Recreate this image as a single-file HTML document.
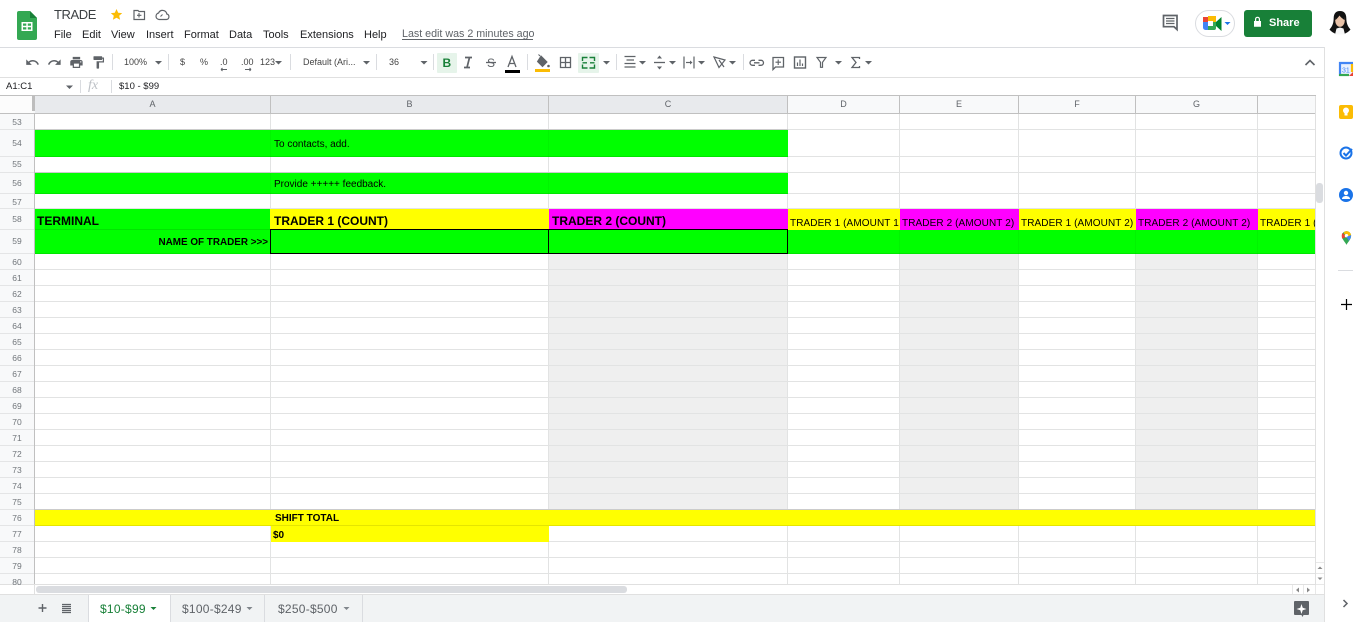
<!DOCTYPE html>
<html><head><meta charset="utf-8"><title>TRADE</title>
<style>
html,body{margin:0;padding:0;width:1365px;height:622px;overflow:hidden;background:#fff;font-family:"Liberation Sans",sans-serif}
svg{position:absolute;left:0;top:0}
.t{position:absolute;white-space:nowrap;color:#000;line-height:14px;height:14px}
.m{font-size:11px;color:#202124;top:28px}
.h{font-size:8.5px;color:#70757a;width:34px;text-align:center;left:0}
.c{font-size:9px;color:#5f6368;top:97px;text-align:center}
.b{font-size:9px;color:#444;top:55px}
.tb{font-size:12px;top:602px;color:#5f6368;font-weight:400;letter-spacing:.25px}
.y{font-size:10px;top:217px;overflow:hidden;letter-spacing:.1px}
</style></head><body>
<svg width="1365" height="622" viewBox="0 0 1365 622">
<!-- chrome -->
<rect x="0" y="47" width="1325" height="1" fill="#dadce0"/>
<rect x="0" y="77" width="1325" height="1" fill="#e0e0e0"/>
<rect x="0" y="95" width="1315" height="1" fill="#e0e0e0"/>
<!-- sheets logo -->
<path d="M19 11h11l7 7v20a2 2 0 0 1-2 2H19a2 2 0 0 1-2-2V13a2 2 0 0 1 2-2z" fill="#34a853"/>
<path d="M30 11v7h7z" fill="#188038"/>
<path d="M21.500 22h11v9h-11z" fill="#fff"/><path d="M23 23.500h3.300v2.200H23zM27.800 23.500H31v2.200h-3.200zM23 27.200h3.300v2.300H23zM27.800 27.200H31v2.300h-3.200z" fill="#34a853"/>
<!-- star, move, cloud -->
<path d="M116.500 9l1.700 3.700 4 .4-3 2.700.9 4-3.600-2.100-3.600 2.100.9-4-3-2.700 4-.4z" fill="#fbbc04"/>
<path d="M134 10.500h4l1 1h5.500v8H134z" fill="none" stroke="#5f6368" stroke-width="1.200"/><path d="M139 13v4.500M137 15.300h4.400" stroke="#5f6368" stroke-width="1.100"/>
<path d="M159 19.500a3.300 3.300 0 0 1-.4-6.500 4.300 4.300 0 0 1 8.200 1 2.800 2.800 0 0 1-.3 5.500z" fill="none" stroke="#5f6368" stroke-width="1.200"/><path d="M160.500 16.500l2-2" stroke="#5f6368" stroke-width="1.100"/>
<path d="M402 39.500h131" stroke="#5f6368" stroke-width="1"/>
<!-- comment icon -->
<path d="M1163.500 15.500h13.500v14l-3-2.800h-10.500z" fill="none" stroke="#5f6368" stroke-width="1.700"/><path d="M1166 18.500h8.500M1166 21h8.500M1166 23.500h8.500" stroke="#5f6368" stroke-width="1.200"/>
<!-- meet -->
<rect x="1195.500" y="10.500" width="39" height="26" rx="13" fill="#fff" stroke="#dadce0"/>
<path d="M1203 17h5v5h-5z" fill="#ea4335"/><path d="M1208 16h8v6h-3v-1h-5z" fill="#fbbc04"/><path d="M1203 22h5v8h-2.500a2.500 2.500 0 0 1-2.500-2.500z" fill="#4285f4"/><path d="M1208 26h8v2a2 2 0 0 1-2 2h-6z" fill="#34a853"/><path d="M1213 22h3v4h-3z" fill="#34a853"/><path d="M1216 22l5.500-5v14l-5.500-5z" fill="#00832d"/><rect x="1208" y="21" width="5" height="5" fill="#fff"/>
<path d="M1224.500 22h6l-3 3z" fill="#1a73e8"/>
<!-- share -->
<rect x="1244" y="10" width="68" height="27" rx="3" fill="#188038"/>
<path d="M1255 21v-1.800a2.500 2.500 0 0 1 5 0V21h1v5.800h-7V21z" fill="#fff"/><path d="M1256.200 21v-1.800a1.300 1.300 0 0 1 2.600 0V21z" fill="#188038"/>
<!-- avatar -->
<path d="M1340 11c-4.500 0-6.200 3-6.300 7-.1 4.500-1 8-4.200 11.500 1.500 2 4 3.500 6.500 4.500h8c2.500-1 5-2.500 6.500-4.500-3.200-3.500-4.100-7-4.200-11.500-.1-4-1.800-7-6.300-7z" fill="#111"/>
<ellipse cx="1340" cy="20.500" rx="4.800" ry="6.300" fill="#e8c2a8"/>
<path d="M1335.500 20c1-1 3-3 4-4.500 1 1.500 3.500 3.500 5 4.500l-.3-5c-1-1.500-2.700-2-4.200-2s-3.500.8-4.300 2.300z" fill="#111"/>
<path d="M1335 34.500l1.500-6 3.500-1 3.500 1 1.500 6z" fill="#f7f7f7"/>
<!-- toolbar icons -->
<g fill="#5f6368">
<path transform="translate(25 55) scale(.62)" d="M12.500 8c-2.650 0-5.050.99-6.900 2.600L2 7v9h9l-3.620-3.620c1.390-1.160 3.160-1.880 5.120-1.880 3.540 0 6.550 2.310 7.600 5.500l2.370-.78C21.080 11.030 17.150 8 12.500 8z"/>
<path transform="translate(47 55) scale(.62)" d="M18.400 10.600C16.550 8.990 14.150 8 11.500 8c-4.650 0-8.580 3.030-9.960 7.220L3.900 16c1.050-3.190 4.050-5.500 7.600-5.500 1.950 0 3.730.72 5.120 1.880L13 16h9V7l-3.600 3.600z"/>
<path transform="translate(69 55) scale(.62)" d="M19 8H5c-1.660 0-3 1.340-3 3v6h4v4h12v-4h4v-6c0-1.660-1.340-3-3-3zm-3 11H8v-5h8v5zm3-7c-.55 0-1-.45-1-1s.45-1 1-1 1 .45 1 1-.45 1-1 1zm-1-9H6v4h12V3z"/>
<path transform="translate(91 55) scale(.62)" d="M18 4V3c0-.55-.45-1-1-1H5c-.55 0-1 .45-1 1v4c0 .55.45 1 1 1h12c.55 0 1-.45 1-1V6h1v4H9v11c0 .55.45 1 1 1h2c.55 0 1-.45 1-1v-9h8V4h-3z"/>
<!-- arrows -->
<path d="M155 61h7l-3.500 3.500zM363 61h7l-3.500 3.500zM420.500 61h7l-3.500 3.500zM275 61h7l-3.500 3.500zM603 61h7l-3.500 3.500zM639 61h7l-3.500 3.500zM669 61h7l-3.500 3.500zM698 61h7l-3.500 3.500zM729 61h7l-3.500 3.500zM835 61h7l-3.500 3.500zM865 61h7l-3.500 3.500z"/>
<path d="M66 85.500h7l-3.500 3.500z"/>
</g>
<path d="M112.500 54v16M168.500 54v16M290.500 54v16M376.500 54v16M433.500 54v16M527.500 54v16M616.500 54v16M743.500 54v16M80.500 80v13M111.500 80v13" stroke="#dadce0"/>
<!-- decimal arrows -->
<path d="M221 69.500h6M221 69.500l1.500-1.500M221 69.500l1.500 1.500M245 69.500h6M251 69.500l-1.500-1.500M251 69.500l-1.500 1.500" stroke="#5f6368" stroke-width="1" fill="none"/>
<!-- B box -->
<rect x="437" y="53" width="20" height="20" rx="1" fill="#e6f4ea"/>
<rect x="578" y="53" width="21" height="20" rx="1" fill="#e6f4ea"/>
<!-- italic, strike, A bar -->
<path d="M465 57.500h7M469.500 57.500l-2.500 10M464 67.500h6" stroke="#5f6368" stroke-width="1.700" fill="none"/>
<path d="M486 62.500h10" stroke="#5f6368" stroke-width="1.300"/>
<rect x="505" y="70" width="15" height="3" fill="#000"/>
<path d="M508 67l4-10.500 4 10.500M509.500 63.500h5" stroke="#5f6368" stroke-width="1.300" fill="none"/>
<!-- fill -->
<path d="M541 56l6 6-4.500 4.500-5-5zM540 56l-1.500-1.500" fill="#5f6368" stroke="#5f6368" stroke-width="1"/><circle cx="548.500" cy="66" r="1.300" fill="#5f6368"/>
<rect x="535" y="69" width="15" height="3" fill="#fbbc04"/>
<!-- borders -->
<path d="M560.500 57.500h10v10h-10zM565.500 57.500v10M560.500 62.500h10" fill="none" stroke="#5f6368" stroke-width="1.300"/>
<!-- merge -->
<path d="M582.500 61v-3.500h5M594.500 61v-3.500h-5M582.500 64.500v3.500h5M594.500 64.500v3.500h-5M582.500 62.800h4.500M594.500 62.800h-4.500" fill="none" stroke="#188038" stroke-width="1.400"/>
<!-- align -->
<path d="M624.500 57h11M626.500 60.500h7.500M624.500 64h11M624.500 67.500h11" stroke="#5f6368" stroke-width="1.300" transform="translate(0 -.5)"/>
<path d="M654 62.500h11" stroke="#5f6368" stroke-width="1.300"/><path d="M659.500 55.500l-2.500 3h5zM659.500 69.500l-2.500-3h5z" fill="#5f6368"/>
<path d="M684 56.500v12M694 56.500v12" stroke="#5f6368" stroke-width="1.200" stroke-dasharray="12 0"/><path d="M686 62.500h5" stroke="#5f6368" stroke-width="1.200"/><path d="M692.500 62.500l-2.500-2v4z" fill="#5f6368"/>
<path d="M714 57l11 3-6 7.500zM719 60l5 7" fill="none" stroke="#5f6368" stroke-width="1.200"/>
<!-- link -->
<path d="M755 60h-2.500a2.500 2.500 0 0 0 0 5h2.500M758.500 60h2.500a2.500 2.500 0 0 1 0 5h-2.500M754 62.500h5.500" transform="translate(0 .3)" fill="none" stroke="#5f6368" stroke-width="1.300"/>
<!-- add comment -->
<path d="M773 57.500h10.500v9.500H775.500l-2.500 2.500z" fill="none" stroke="#5f6368" stroke-width="1.300"/><path d="M778.200 59.500v5.500M775.500 62.200h5.500" stroke="#5f6368" stroke-width="1.100"/>
<!-- chart -->
<rect x="794.500" y="57" width="11" height="11" fill="none" stroke="#5f6368" stroke-width="1.400"/><path d="M797.500 62.500v3.500M800 59.500v6.500M802.500 63.500v2.500" stroke="#5f6368" stroke-width="1.200"/>
<!-- filter -->
<path d="M817 57.500h9l-3.500 4.800v5h-2v-5z" fill="none" stroke="#5f6368" stroke-width="1.200"/>
<!-- sigma -->
<path d="M859.500 59v-1.500h-7.500l4 5-4 5h7.500V66" fill="none" stroke="#5f6368" stroke-width="1.300"/>
<!-- collapse -->
<path d="M1305.500 65l4.500-4.500 4.500 4.500" fill="none" stroke="#5f6368" stroke-width="1.600"/>

<!-- headers -->
<rect x="0" y="96" width="1316" height="18" fill="#f8f9fa"/>
<rect x="35" y="96" width="753" height="17" fill="#e8eaed"/>
<rect x="0" y="114" width="34" height="471" fill="#f8f9fa"/>
<rect x="0" y="96" width="33" height="17" fill="#fcfcfc"/>
<rect x="32" y="96" width="3" height="15" fill="#bdbdbd"/>
<path d="M0 95.500H1316M0 113.500H1316M270.500 96v18M548.500 96v18M787.500 96v18M899.500 96v18M1018.500 96v18M1135.500 96v18M1257.500 96v18" stroke="#c0c0c0"/>
<path d="M34.500 114V585" stroke="#c0c0c0"/>
<path d="M0 129.500h34M0 156.500h34M0 172.500h34M0 193.500h34M0 208.500h34M0 229.500h34M0 253.500h34M0 269.500h34M0 285.500h34M0 301.500h34M0 317.500h34M0 333.500h34M0 349.500h34M0 365.500h34M0 381.500h34M0 397.500h34M0 413.500h34M0 429.500h34M0 445.500h34M0 461.500h34M0 477.500h34M0 493.500h34M0 509.500h34M0 525.500h34M0 541.500h34M0 557.500h34M0 573.500h34" stroke="#e4e5e6"/>

<!-- fills under grid -->
<rect x="549" y="254" width="238" height="256" fill="#efefef"/>
<rect x="900" y="254" width="118" height="256" fill="#efefef"/>
<rect x="1136" y="254" width="121" height="256" fill="#efefef"/>
<!-- grid -->
<path d="M35 129.500H1315M35 156.500H1315M35 172.500H1315M35 193.500H1315M35 208.500H1315M35 229.500H1315M35 253.500H1315M35 269.500H1315M35 285.500H1315M35 301.500H1315M35 317.500H1315M35 333.500H1315M35 349.500H1315M35 365.500H1315M35 381.500H1315M35 397.500H1315M35 413.500H1315M35 429.500H1315M35 445.500H1315M35 461.500H1315M35 477.500H1315M35 493.500H1315M35 509.500H1315M35 525.500H1315M35 541.500H1315M35 557.500H1315M35 573.500H1315" stroke="#e2e3e3"/>
<path d="M270.500 114V585M548.500 114V585M787.500 114V585M899.500 114V585M1018.500 114V585M1135.500 114V585M1257.500 114V585" stroke="#e2e3e3"/>
<!-- coloured -->
<rect x="35" y="130" width="753" height="27" fill="#0f0"/>
<rect x="35" y="173" width="753" height="21" fill="#0f0"/>
<rect x="35" y="209" width="236" height="21" fill="#0f0"/>
<rect x="270" y="209" width="279" height="21" fill="#ff0"/>
<rect x="549" y="209" width="239" height="21" fill="#f0f"/>
<rect x="788" y="209" width="112" height="21" fill="#ff0"/>
<rect x="900" y="209" width="119" height="21" fill="#f0f"/>
<rect x="1019" y="209" width="117" height="21" fill="#ff0"/>
<rect x="1136" y="209" width="122" height="21" fill="#f0f"/>
<rect x="1258" y="209" width="57" height="21" fill="#ff0"/>
<rect x="35" y="230" width="1280" height="24" fill="#0f0"/>
<rect x="35" y="510" width="1280" height="16" fill="#ff0"/>
<rect x="271" y="526" width="278" height="16" fill="#ff0"/>
<path d="M35 129.500H788M35 156.500H788M35 172.500H788M35 193.500H788M35 229.500H270M788 253.500H1315M35 253.500H270" stroke="#000" stroke-opacity=".1"/>
<path d="M270.500 130v27M548.500 130v27M270.500 173v21M548.500 173v21M899.500 230v24M1018.500 230v24M1135.500 230v24M1257.500 230v24" stroke="#000" stroke-opacity=".04"/>
<path d="M35 509.500H1315M35 525.500H1315" stroke="#000" stroke-opacity=".1"/>
<rect x="270.500" y="229.500" width="278" height="24" fill="none" stroke="#000"/>
<rect x="548.500" y="229.500" width="239" height="24" fill="none" stroke="#000"/>
<!-- bottom / scrollbars -->
<rect x="0" y="585" width="1325" height="10" fill="#fff"/>
<path d="M0 584.500H1316M34.500 585v9" stroke="#e0e0e0"/>
<rect x="36" y="586" width="591" height="7" rx="3" fill="#dadce0"/>
<rect x="1316" y="96" width="8" height="499" fill="#fff"/>
<path d="M1315.500 96V595" stroke="#e0e0e0"/>
<rect x="1316" y="183" width="7" height="20" rx="3" fill="#dadce0"/>
<path d="M1316 562.500h8M1316 573.500h8M1316 584.500h8M1292.500 585v9M1303.500 585v9M1315.500 585v9" stroke="#e8e8e8"/>
<path d="M1320 566.500l-2.500 2.500h5zM1320 580l-2.500-2.500h5zM1296 590l3-2.500v5zM1310 590l-3-2.500v5z" fill="#888"/>
<!-- footer -->
<rect x="0" y="595" width="1325" height="27" fill="#f1f3f4"/>
<rect x="0" y="594" width="1325" height="1" fill="#e0e0e0"/>
<rect x="88" y="595" width="82" height="27" fill="#fff"/>
<path d="M88.500 595v27M170.500 595v27M264.500 595v27M362.500 595v27" stroke="#dadce0"/>
<path d="M42.500 604v8M38.500 608h8" stroke="#5f6368" stroke-width="1.400"/>
<path d="M62 604.500h9M62 606.500h9M62 608.500h9M62 610.500h9M62 612.500h9" stroke="#5f6368" stroke-width="1.200"/>
<path d="M150.500 607h6l-3 3z" fill="#188038"/>
<path d="M246.500 607h6l-3 3zM343.500 607h6l-3 3z" fill="#80868b"/>
<path d="M1295 601h13a1 1 0 0 1 1 1v12a1 1 0 0 1-1 1h-4.500l-1 2-1-2H1295a1 1 0 0 1-1-1v-12a1 1 0 0 1 1-1z" fill="#5f6368"/>
<path d="M1301.500 604l1.200 3.800 3.800 1.200-3.800 1.200-1.200 3.800-1.200-3.800-3.800-1.200 3.800-1.200z" fill="#fff"/>
<!-- side panel -->
<rect x="1325" y="48" width="40" height="574" fill="#fff"/>
<path d="M1324.500 47V622" stroke="#e0e0e0" stroke-width="1"/>
<rect x="1339" y="62" width="14" height="14" rx="1" fill="#e8f0fe"/>
<path d="M1340 76V63h13" fill="none" stroke="#4285f4" stroke-width="2.200"/>
<path d="M1352 64v8" stroke="#fbbc04" stroke-width="2.200"/><path d="M1339 75h10" stroke="#34a853" stroke-width="2.200"/><path d="M1349 76h4v-4z" fill="#ea4335"/>
<text x="1342" y="72.500" font-size="7" font-family="Liberation Sans, sans-serif" fill="#4285f4">31</text>
<rect x="1339" y="105" width="14" height="14" rx="2" fill="#fbbc04"/>
<circle cx="1346" cy="110.500" r="3" fill="#fff"/><rect x="1344.500" y="113" width="3" height="2.500" fill="#fff"/>
<circle cx="1346" cy="153" r="5.500" fill="none" stroke="#1a73e8" stroke-width="2"/><path d="M1343.500 153l2.500 2.500 6-6.500" fill="none" stroke="#1a73e8" stroke-width="2"/>
<circle cx="1346" cy="195" r="7" fill="#1a73e8"/><circle cx="1346" cy="193" r="2.200" fill="#fff"/><path d="M1342 199c0-2 2-3 4-3s4 1 4 3z" fill="#fff"/>
<g transform="translate(1346.500 238) scale(1.150) translate(-1346 -238)">
<path d="M1346 244c-1-2.500-4-4.500-4-8a4 4 0 0 1 8 0c0 3.500-3 5.500-4 8z" fill="#34a853"/><path d="M1342.500 233.500l3.500 3.500-3.800 1.500c-.5-2-.5-3.500.3-5z" fill="#ea4335"/><path d="M1346 232a4 4 0 0 1 4 3.500l-4 1.500-2.500-3.500c.6-1 1.500-1.500 2.500-1.500z" fill="#fbbc04"/><circle cx="1346" cy="236" r="1.500" fill="#fff"/><path d="M1346 237l4-1.500c.2 2-1 3.500-2 5z" fill="#4285f4"/>
</g>
<path d="M1338 270.500h15" stroke="#dadce0"/>
<path d="M1346.500 299v11M1341 304.500h11" stroke="#000" stroke-width="1.200"/>
<path d="M1343.500 600l3.500 3.500-3.500 3.500" fill="none" stroke="#5f6368" stroke-width="1.500"/>
</svg>

<span class="t" style="left:54px;top:8px;font-size:13px;letter-spacing:-.4px;color:#3c4043">TRADE</span>
<span class="t m" style="left:54px">File</span><span class="t m" style="left:82px">Edit</span><span class="t m" style="left:111px">View</span><span class="t m" style="left:146px">Insert</span><span class="t m" style="left:184px">Format</span><span class="t m" style="left:229px">Data</span><span class="t m" style="left:263px">Tools</span><span class="t m" style="left:300px">Extensions</span><span class="t m" style="left:364px">Help</span>
<span class="t m" style="left:402px;color:#5f6368;top:27px;font-size:10.700px">Last edit was 2 minutes ago</span>
<span class="t" style="left:1269px;top:16px;font-size:11px;font-weight:700;color:#fff">Share</span>

<span class="t b" style="left:124px">100%</span><span class="t b" style="left:180px">$</span><span class="t b" style="left:200px">%</span><span class="t b" style="left:220px">.0</span><span class="t b" style="left:241px">.00</span><span class="t b" style="left:260px">123</span><span class="t b" style="left:303px">Default (Ari...</span><span class="t b" style="left:389px">36</span>
<span class="t" style="left:442.500px;top:56px;font-size:12px;font-weight:700;color:#188038">B</span>
<span class="t" style="left:487px;top:56px;font-size:12px;color:#5f6368">S</span>

<span class="t" style="left:6px;top:80px;font-size:9.500px;color:#202124">A1:C1</span>
<span class="t" style="left:88px;top:79px;font-size:14px;font-style:italic;font-family:'Liberation Serif',serif;color:#bdc1c6">fx</span>
<span class="t" style="left:119px;top:80px;font-size:9.500px;color:#202124">$10 - $99</span>

<span class="t c" style="left:35px;width:235px">A</span><span class="t c" style="left:271px;width:277px">B</span><span class="t c" style="left:549px;width:238px">C</span><span class="t c" style="left:788px;width:111px">D</span><span class="t c" style="left:900px;width:118px">E</span><span class="t c" style="left:1019px;width:116px">F</span><span class="t c" style="left:1136px;width:121px">G</span>

<span class="t h" style="top:115px">53</span><span class="t h" style="top:136px">54</span><span class="t h" style="top:157px">55</span><span class="t h" style="top:176px">56</span><span class="t h" style="top:195px">57</span><span class="t h" style="top:212px">58</span><span class="t h" style="top:234px">59</span><span class="t h" style="top:255px">60</span><span class="t h" style="top:271px">61</span><span class="t h" style="top:287px">62</span><span class="t h" style="top:303px">63</span><span class="t h" style="top:319px">64</span><span class="t h" style="top:335px">65</span><span class="t h" style="top:351px">66</span><span class="t h" style="top:367px">67</span><span class="t h" style="top:383px">68</span><span class="t h" style="top:399px">69</span><span class="t h" style="top:415px">70</span><span class="t h" style="top:431px">71</span><span class="t h" style="top:447px">72</span><span class="t h" style="top:463px">73</span><span class="t h" style="top:479px">74</span><span class="t h" style="top:495px">75</span><span class="t h" style="top:511px">76</span><span class="t h" style="top:527px">77</span><span class="t h" style="top:543px">78</span><span class="t h" style="top:559px">79</span><span class="t h" style="top:575px;height:10px;overflow:hidden">80</span>

<span class="t" style="left:274px;top:138px;font-size:10px">To contacts, add.</span>
<span class="t" style="left:274px;top:178px;font-size:10px">Provide +++++ feedback.</span>
<span class="t" style="left:37px;top:214px;font-size:12px;font-weight:700">TERMINAL</span>
<span class="t" style="left:274px;top:214px;font-size:12px;font-weight:700">TRADER 1 (COUNT)</span>
<span class="t" style="left:552px;top:214px;font-size:12px;font-weight:700">TRADER 2 (COUNT)</span>
<span class="t" style="left:100px;width:168px;text-align:right;top:236px;font-size:9.900px;font-weight:700">NAME OF TRADER &gt;&gt;&gt;</span>
<span class="t y" style="left:790px;width:109px">TRADER 1 (AMOUNT 1)</span>
<span class="t y" style="left:902px;width:116px">TRADER 2 (AMOUNT 2)</span>
<span class="t y" style="left:1021px;width:114px">TRADER 1 (AMOUNT 2)</span>
<span class="t y" style="left:1138px;width:119px">TRADER 2 (AMOUNT 2)</span>
<span class="t y" style="left:1260px;width:55px">TRADER 1 (AMOUNT 1)</span>
<span class="t" style="left:275px;top:512px;font-size:10px;font-weight:700">SHIFT TOTAL</span>
<span class="t" style="left:273px;top:529px;font-size:10px;font-weight:700">$0</span>

<span class="t tb" style="left:100px;color:#188038">$10-$99</span>
<span class="t tb" style="left:182px">$100-$249</span>
<span class="t tb" style="left:278px">$250-$500</span>
</body></html>
